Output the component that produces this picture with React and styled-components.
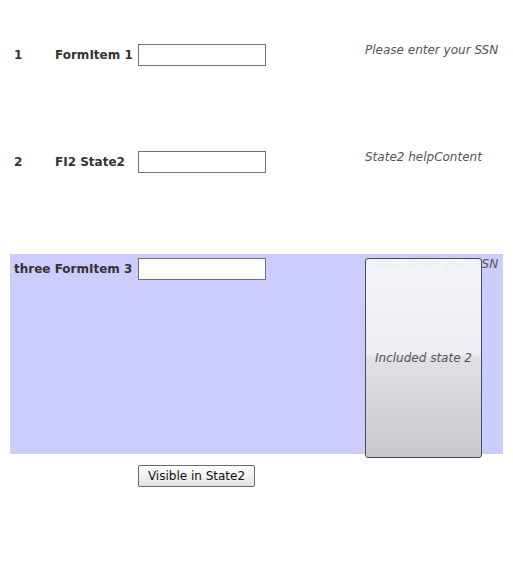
import React from "react";
import styled, { createGlobalStyle } from "styled-components";

const Global = createGlobalStyle`
  html, body { margin: 0; padding: 0; background: #fff; }
  body { font-family: "DejaVu Sans", sans-serif; font-size: 12px; color: #333; }
`;

const Page = styled.div`
  padding: 40px 10px 0 10px;
`;

const Row = styled.div`
  position: relative;
  display: grid;
  grid-template-columns: 41px 83px 128px 99px 1fr;
  align-items: start;
  height: ${(p) => p.$h}px;
  padding: 4px 0 0 4px;
  box-sizing: border-box;
  background: ${(p) => (p.$hl ? "#ccccff" : "transparent")};
`;

const Num = styled.div`
  font-weight: bold;
  color: #333;
  line-height: 23px;
`;

const Label = styled.div`
  font-weight: bold;
  color: #333;
  line-height: 23px;
  white-space: nowrap;
  grid-column: ${(p) => (p.$span ? "1 / 3" : "auto")};
`;

const Input = styled.input`
  box-sizing: border-box;
  width: 128px;
  height: 22px;
  margin: 0;
  border: 1px solid #707070;
  background: #fff;
  padding: 0 3px;
  font: 12px "DejaVu Sans", sans-serif;
`;

const Help = styled.div`
  grid-column: 5;
  font-style: italic;
  color: #555;
  white-space: nowrap;
  line-height: 14px;
  margin-top: -1px;
`;

const Panel = styled.div`
  position: absolute;
  left: 355px;
  top: 4px;
  width: 117px;
  height: 200px;
  box-sizing: border-box;
  border: 1px solid #4a4a55;
  border-radius: 3px;
  background: linear-gradient(
    to bottom,
    rgba(247, 247, 251, 0.95) 0%,
    rgba(238, 238, 244, 0.97) 48%,
    rgba(224, 224, 230, 1) 50%,
    rgba(200, 200, 205, 1) 100%
  );
  display: flex;
  align-items: center;
  justify-content: center;
  font-style: italic;
  color: #555;
`;

const ButtonRow = styled.div`
  padding: 11px 0 0 128px;
`;

const Button = styled.button`
  box-sizing: border-box;
  width: 117px;
  height: 22px;
  margin: 0;
  border: 1px solid #6a6a6a;
  border-radius: 2px;
  background: linear-gradient(to bottom, #ffffff, #e2e2e2);
  font: 12px/19px "DejaVu Sans", sans-serif;
  color: #111;
  padding: 1px 0 0 0;
`;

export default function App() {
  return (
    <>
      <Global />
      <Page>
        <Row $h={107}>
          <Num>1</Num>
          <Label>FormItem 1</Label>
          <Input />
          <span />
          <Help>Please enter your SSN</Help>
        </Row>
        <Row $h={107}>
          <Num>2</Num>
          <Label>FI2 State2</Label>
          <Input />
          <span />
          <Help>State2 helpContent</Help>
        </Row>
        <Row $h={200} $hl>
          <Label $span>three FormItem 3</Label>
          <Input />
          <span />
          <Help>Please enter your SSN</Help>
          <Panel>Included state 2</Panel>
        </Row>
        <ButtonRow>
          <Button>Visible in State2</Button>
        </ButtonRow>
      </Page>
    </>
  );
}
